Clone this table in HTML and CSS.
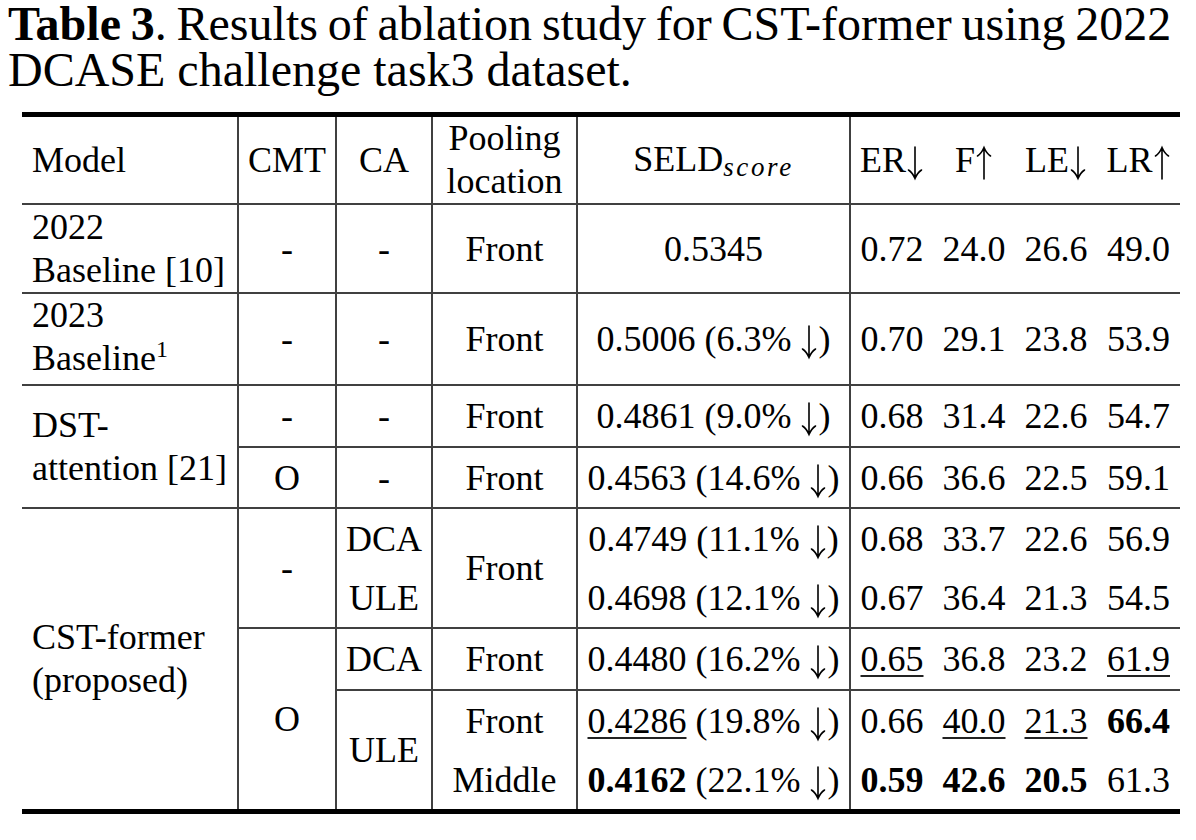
FILE: index.html
```html
<!DOCTYPE html>
<html>
<head>
<meta charset="utf-8">
<link rel="stylesheet" href="styles.css">
</head>
<body>
<div class="page">
  <p class="caption"><span class="line1"><b>Table 3</b>. Results of ablation study for CST-former using 2022</span><br>DCASE challenge task3 dataset.</p>
  <table class="tbl">
    <colgroup>
      <col class="c-model">
      <col class="c-cmt vl">
      <col class="c-ca vl">
      <col class="c-pool vl">
      <col class="c-seld vl">
      <col class="c-er vl">
      <col class="c-f">
      <col class="c-le">
      <col class="c-lr">
    </colgroup>
    <thead>
      <tr class="hdr">
        <th class="model">Model</th>
        <th>CMT</th>
        <th>CA</th>
        <th class="two">Pooling<br>location</th>
        <th>SELD<span class="sub">score</span></th>
        <th>ER<svg class="arr" viewBox="0 0 18 32" width="18" height="32"><path d="M9 0V31M2.5 23C5.5 25 7.5 28 9 31.5C10.5 28 12.5 25 15.5 23"/></svg></th>
        <th>F<svg class="arr" viewBox="0 0 18 32" width="18" height="32"><path d="M9 32V1M2.5 9C5.5 7 7.5 4 9 0.5C10.5 4 12.5 7 15.5 9"/></svg></th>
        <th>LE<svg class="arr" viewBox="0 0 18 32" width="18" height="32"><path d="M9 0V31M2.5 23C5.5 25 7.5 28 9 31.5C10.5 28 12.5 25 15.5 23"/></svg></th>
        <th>LR<svg class="arr" viewBox="0 0 18 32" width="18" height="32"><path d="M9 32V1M2.5 9C5.5 7 7.5 4 9 0.5C10.5 4 12.5 7 15.5 9"/></svg></th>
      </tr>
    </thead>
    <tbody>
      <tr class="tall sep">
        <td class="model two">2022<br>Baseline [10]</td>
        <td>-</td><td>-</td><td>Front</td>
        <td>0.5345</td>
        <td>0.72</td><td>24.0</td><td>26.6</td><td>49.0</td>
      </tr>
      <tr class="tall sep">
        <td class="model two">2023<br>Baseline<span class="sup">1</span></td>
        <td>-</td><td>-</td><td>Front</td>
        <td>0.5006 (6.3% <svg class="arr" viewBox="0 0 18 32" width="18" height="32"><path d="M9 0V31M2.5 23C5.5 25 7.5 28 9 31.5C10.5 28 12.5 25 15.5 23"/></svg>)</td>
        <td>0.70</td><td>29.1</td><td>23.8</td><td>53.9</td>
      </tr>
      <tr class="r62 sep">
        <td class="model two" rowspan="2">DST-<br>attention [21]</td>
        <td>-</td><td>-</td><td>Front</td>
        <td>0.4861 (9.0% <svg class="arr" viewBox="0 0 18 32" width="18" height="32"><path d="M9 0V31M2.5 23C5.5 25 7.5 28 9 31.5C10.5 28 12.5 25 15.5 23"/></svg>)</td>
        <td>0.68</td><td>31.4</td><td>22.6</td><td>54.7</td>
      </tr>
      <tr class="r61 sep">
        <td>O</td><td>-</td><td>Front</td>
        <td>0.4563 (14.6% <svg class="arr" viewBox="0 0 18 32" width="18" height="32"><path d="M9 0V31M2.5 23C5.5 25 7.5 28 9 31.5C10.5 28 12.5 25 15.5 23"/></svg>)</td>
        <td>0.66</td><td>36.6</td><td>22.5</td><td>59.1</td>
      </tr>
      <tr class="r61 sep">
        <td class="model two" rowspan="5">CST-former<br>(proposed)</td>
        <td rowspan="2">-</td>
        <td>DCA</td>
        <td rowspan="2">Front</td>
        <td>0.4749 (11.1% <svg class="arr" viewBox="0 0 18 32" width="18" height="32"><path d="M9 0V31M2.5 23C5.5 25 7.5 28 9 31.5C10.5 28 12.5 25 15.5 23"/></svg>)</td>
        <td>0.68</td><td>33.7</td><td>22.6</td><td>56.9</td>
      </tr>
      <tr class="r61">
        <td>ULE</td>
        <td>0.4698 (12.1% <svg class="arr" viewBox="0 0 18 32" width="18" height="32"><path d="M9 0V31M2.5 23C5.5 25 7.5 28 9 31.5C10.5 28 12.5 25 15.5 23"/></svg>)</td>
        <td>0.67</td><td>36.4</td><td>21.3</td><td>54.5</td>
      </tr>
      <tr class="r62 sep">
        <td rowspan="3">O</td>
        <td>DCA</td>
        <td>Front</td>
        <td>0.4480 (16.2% <svg class="arr" viewBox="0 0 18 32" width="18" height="32"><path d="M9 0V31M2.5 23C5.5 25 7.5 28 9 31.5C10.5 28 12.5 25 15.5 23"/></svg>)</td>
        <td><span class="ul">0.65</span></td><td>36.8</td><td>23.2</td><td><span class="ul">61.9</span></td>
      </tr>
      <tr class="r61 sep">
        <td rowspan="2">ULE</td>
        <td>Front</td>
        <td><span class="ul">0.4286</span> (19.8% <svg class="arr" viewBox="0 0 18 32" width="18" height="32"><path d="M9 0V31M2.5 23C5.5 25 7.5 28 9 31.5C10.5 28 12.5 25 15.5 23"/></svg>)</td>
        <td>0.66</td><td><span class="ul">40.0</span></td><td><span class="ul">21.3</span></td><td><b>66.4</b></td>
      </tr>
      <tr class="r61">
        <td>Middle</td>
        <td><b>0.4162</b> (22.1% <svg class="arr" viewBox="0 0 18 32" width="18" height="32"><path d="M9 0V31M2.5 23C5.5 25 7.5 28 9 31.5C10.5 28 12.5 25 15.5 23"/></svg>)</td>
        <td><b>0.59</b></td><td><b>42.6</b></td><td><b>20.5</b></td><td>61.3</td>
      </tr>
    </tbody>
  </table>
</div>
</body>
</html>
```

FILE: styles.css
```css
html, body {
  margin: 0;
  padding: 0;
  background: #ffffff;
}

body {
  font-family: "Liberation Serif", "Times New Roman", serif;
  color: #000000;
  width: 1196px;
  height: 840px;
  overflow: hidden;
}

.page {
  padding: 1px 0 0 8px;
}

.caption {
  margin: 0;
  font-size: 48px;
  line-height: 46px;
  white-space: nowrap;
}

.caption .line1 {
  word-spacing: -2.2px;
}

.caption b {
  font-weight: bold;
}

.tbl {
  margin: 19px 0 0 14px;
  width: 1158px;
  table-layout: fixed;
  border-collapse: collapse;
  border-top: 5px solid #000000;
  border-bottom: 5px solid #000000;
  font-size: 36px;
}

.c-model { width: 216px; }
.c-cmt { width: 98px; }
.c-ca { width: 96px; }
.c-pool { width: 145px; }
.c-seld { width: 273px; }
.c-er { width: 83px; }
.c-f { width: 82px; }
.c-le { width: 82px; }
.c-lr { width: 83px; }

.vl {
  border-left: 2px solid #404040;
}

.tbl th,
.tbl td {
  padding: 0;
  text-align: center;
  vertical-align: middle;
  font-weight: normal;
  white-space: nowrap;
  line-height: 40px;
}

.tbl .model {
  text-align: left;
  padding-left: 10px;
}

.tbl .two {
  line-height: 43px;
}

.hdr th {
  height: 86px;
  border-bottom: 2px solid #404040;
}

.sep > td {
  border-top: 2px solid #404040;
}

.tall > td { height: 87px; }
.r62 > td { height: 60px; }
.r61 > td { height: 59px; }

.arr {
  display: inline-block;
  vertical-align: -7px;
  overflow: visible;
}

.arr path {
  fill: none;
  stroke: #000000;
  stroke-width: 1.6;
  stroke-linecap: round;
}

.sub {
  font-style: italic;
  font-size: 27px;
  letter-spacing: 2.6px;
  position: relative;
  top: 5px;
}

.sup {
  font-size: 24px;
  position: relative;
  top: -13px;
}

.ul {
  text-decoration: underline;
  text-decoration-thickness: 1.5px;
  text-underline-offset: 4px;
  text-decoration-color: #222222;
}

.tbl b {
  font-weight: bold;
}
```
